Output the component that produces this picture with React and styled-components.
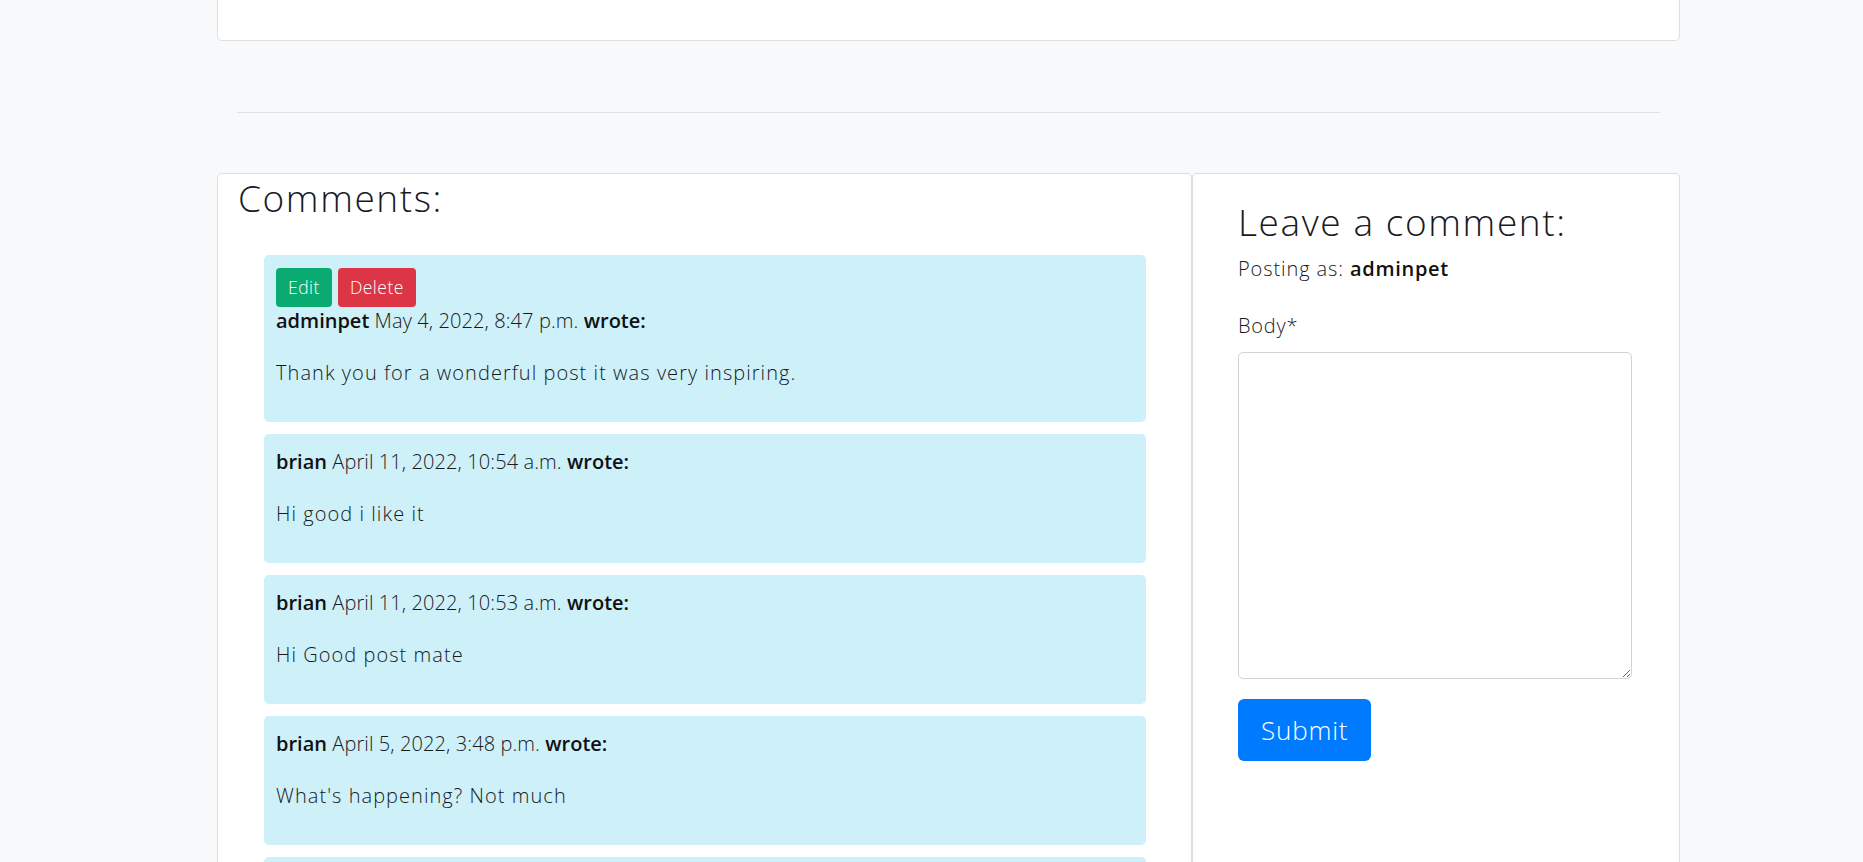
import React from 'react';
import styled, { createGlobalStyle } from 'styled-components';

const GlobalStyle = createGlobalStyle`
  * { box-sizing: border-box; }
  html, body { margin: 0; padding: 0; }
  body {
    background: #f8f9fa;
    font-family: "Open Sans", "Liberation Sans", sans-serif;
    font-weight: 300;
    font-size: 20px;
    line-height: 30px;
    color: #181a1d;
  }
`;

const Page = styled.div`
  width: 1463px;
  margin-left: 217px;
`;

const Card = styled.div`
  background: #fff;
  border: 1px solid rgba(0, 0, 0, 0.125);
  border-radius: 5px;
`;

const TopCard = styled(Card)`
  height: 62px;
  margin-top: -21px;
`;

const Divider = styled.div`
  height: 1px;
  background: #dfe1e3;
  margin: 71px 20px 0;
`;

const Row = styled.div`
  display: flex;
  align-items: stretch;
  margin-top: 60px;
`;

const CommentsCard = styled(Card)`
  width: 975px;
  flex: none;
`;

const FormCard = styled(Card)`
  width: 488px;
  flex: none;
  padding: 27px 45px 40px;
`;

const SectionTitle = styled.h3`
  margin: 0;
  font-size: 37px;
  line-height: 42px;
  font-weight: 300;
  letter-spacing: 1.6px;
  color: #181a1d;
`;

const CommentsTitle = styled(SectionTitle)`
  padding: 3px 0 0 20px;
`;

const FormTitle = styled(SectionTitle)`
  margin-bottom: 11px;
`;

const CommentList = styled.div`
  display: flex;
  flex-direction: column;
  gap: 12px;
  padding: 36px 45px 30px 46px;
`;

const CommentBox = styled.div`
  background: #cef0f9;
  border-radius: 5px;
  padding: 13px 12px 14px;
`;

const Actions = styled.div`
  display: flex;
  gap: 6px;
  margin: 0 0 -1px;
`;

const SmallButton = styled.button`
  border: none;
  border-radius: 4px;
  padding: 6px 12px;
  font-family: inherit;
  font-weight: 300;
  font-size: 17.5px;
  line-height: 27px;
  letter-spacing: 0.5px;
  color: #fff;
  background: ${(p) => (p.$variant === 'danger' ? '#dc3545' : '#0aab71')};
  cursor: pointer;
`;

const CommentHeader = styled.p`
  margin: 0;
  line-height: 30px;
  letter-spacing: 0.1px;
`;

const Strong = styled.strong`
  font-weight: 600;
  letter-spacing: ${(p) => (p.$spaced ? '0.7px' : '0')};
  color: #111;
`;

const CommentBody = styled.p`
  margin: 22px 0 20px;
  line-height: 30px;
  letter-spacing: 1.05px;
`;

const Posting = styled.p`
  margin: 0 0 27px;
  letter-spacing: 0.9px;
`;

const Label = styled.label`
  display: block;
  margin-bottom: 11px;
  letter-spacing: 0.8px;
`;

const TextArea = styled.textarea`
  display: block;
  width: 394px;
  height: 327px;
  border: 1px solid #ced4da;
  border-radius: 5px;
  background: #fff;
  font-family: inherit;
  font-size: 20px;
  margin: 0 0 20px;
  padding: 7px 15px;
`;

const SubmitButton = styled.button`
  height: 62px;
  padding: 0 23px;
  border: none;
  border-radius: 6px;
  background: #007bff;
  color: #fff;
  font-family: inherit;
  font-weight: 300;
  font-size: 26px;
  letter-spacing: 0.8px;
  cursor: pointer;
`;

const comments = [
  { author: 'adminpet', date: 'May 4, 2022, 8:47 p.m.', body: 'Thank you for a wonderful post it was very inspiring.', own: true },
  { author: 'brian', date: 'April 11, 2022, 10:54 a.m.', body: 'Hi good i like it' },
  { author: 'brian', date: 'April 11, 2022, 10:53 a.m.', body: 'Hi Good post mate' },
  { author: 'brian', date: 'April 5, 2022, 3:48 p.m.', body: "What's happening? Not much" },
  { author: 'brian', date: 'April 5, 2022, 3:40 p.m.', body: 'Nice one' },
];

export default function App() {
  return (
    <>
      <GlobalStyle />
      <Page>
        <TopCard />
        <Divider />
        <Row>
          <CommentsCard>
            <CommentsTitle>Comments:</CommentsTitle>
            <CommentList>
              {comments.map((c, i) => (
                <CommentBox key={i}>
                  {c.own && (
                    <Actions>
                      <SmallButton>Edit</SmallButton>
                      <SmallButton $variant="danger">Delete</SmallButton>
                    </Actions>
                  )}
                  <CommentHeader>
                    <Strong>{c.author}</Strong> {c.date} <Strong>wrote:</Strong>
                  </CommentHeader>
                  <CommentBody>{c.body}</CommentBody>
                </CommentBox>
              ))}
            </CommentList>
          </CommentsCard>
          <FormCard>
            <FormTitle>Leave a comment:</FormTitle>
            <Posting>
              Posting as: <Strong $spaced>adminpet</Strong>
            </Posting>
            <form onSubmit={(e) => e.preventDefault()}>
              <Label htmlFor="id_body">Body*</Label>
              <TextArea id="id_body" name="body" />
              <SubmitButton type="submit">Submit</SubmitButton>
            </form>
          </FormCard>
        </Row>
      </Page>
    </>
  );
}
